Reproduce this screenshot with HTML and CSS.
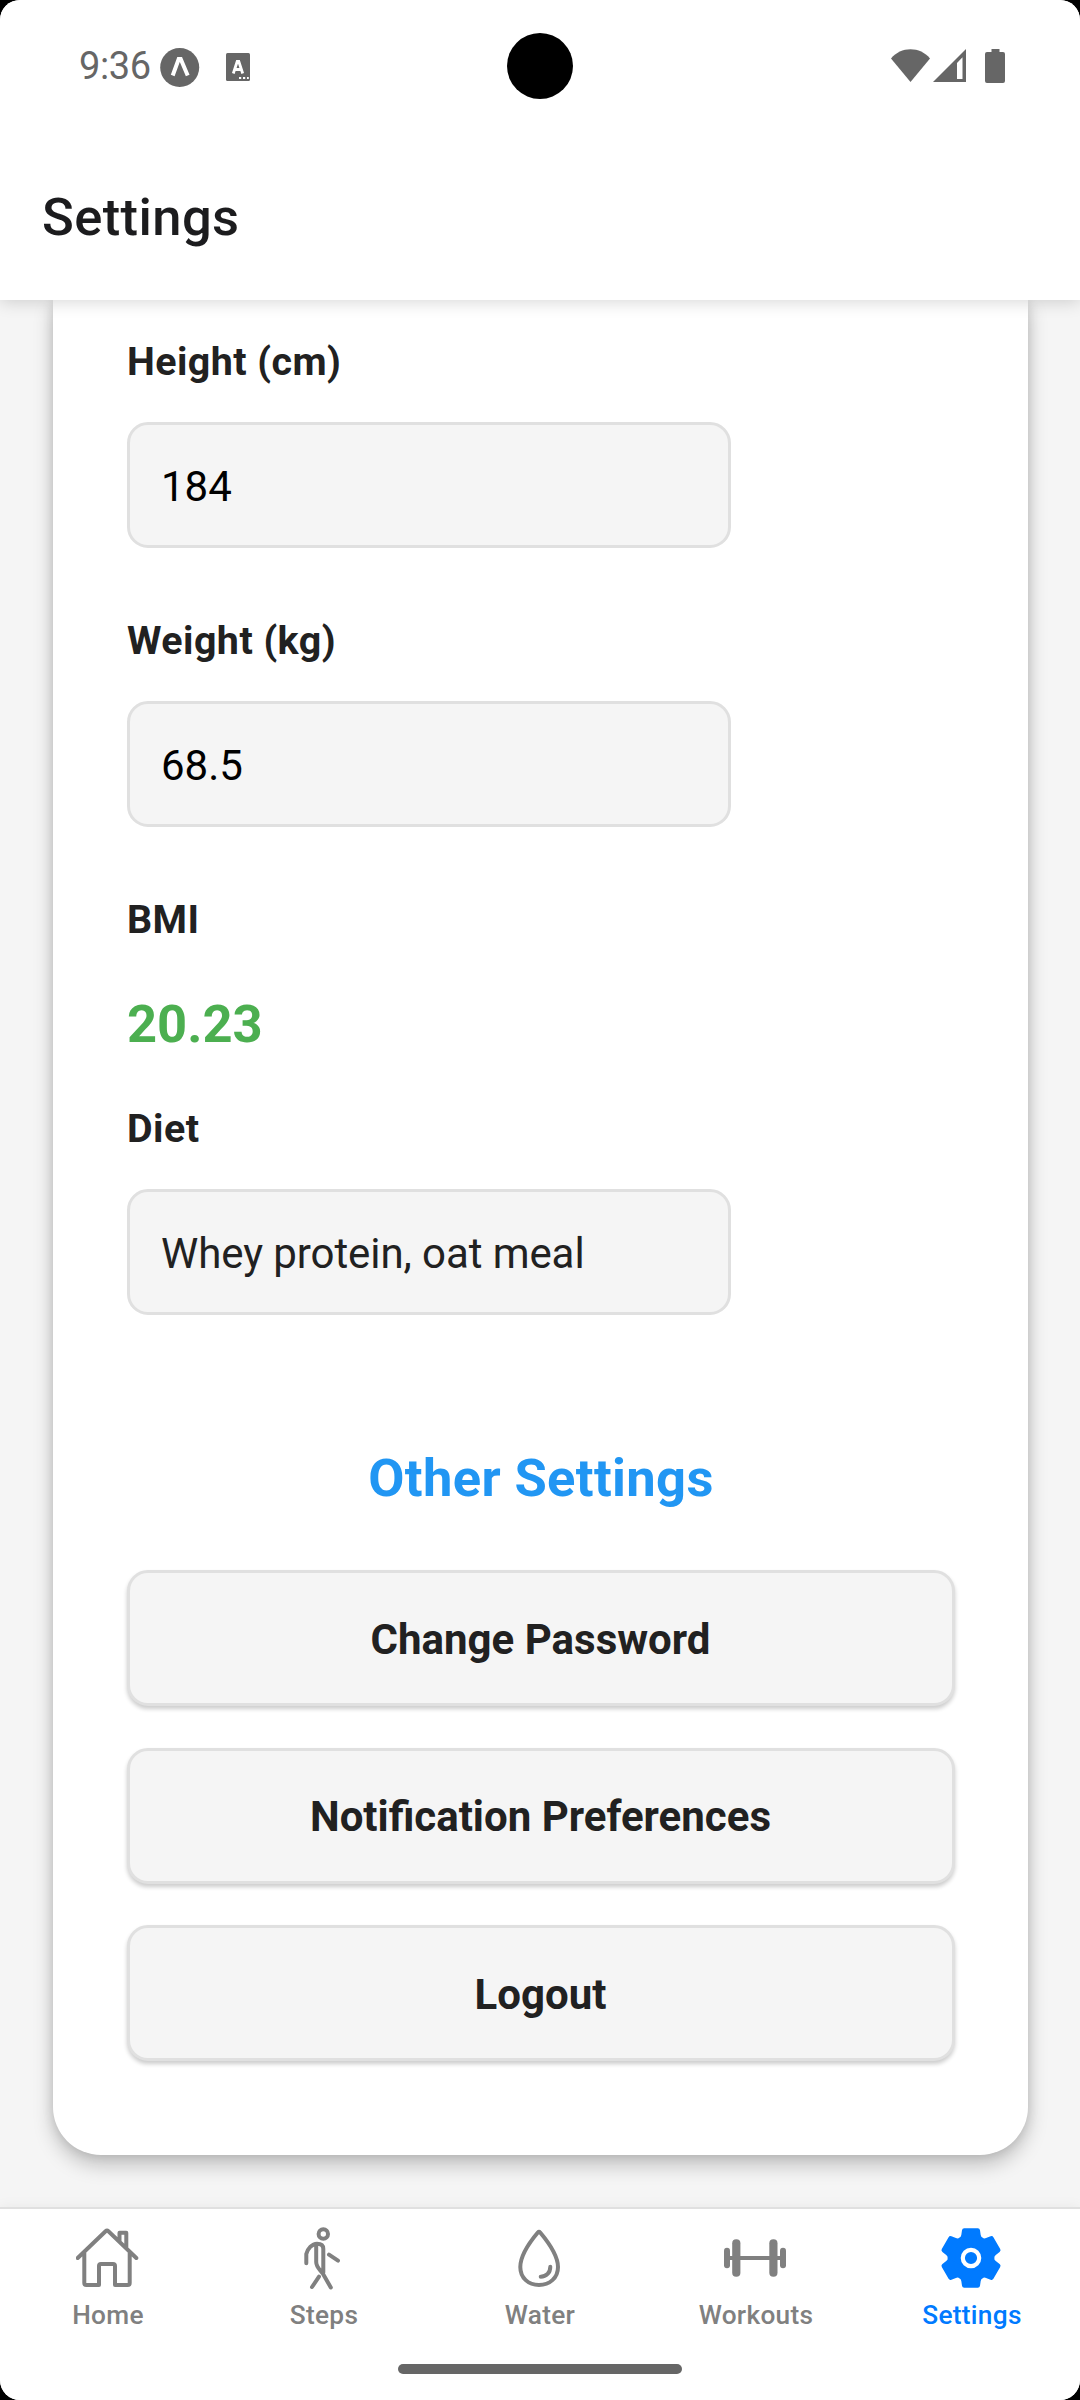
FILE: index.html
```html
<!DOCTYPE html>
<html lang="en">
<head>
<meta charset="utf-8">
<title>Settings</title>
<link rel="stylesheet" href="styles.css">
</head>
<body>
<div class="screen">
  <header class="top">
    <div class="status">
      <span class="clock">9:36</span>
      <svg class="expo" viewBox="0 0 40 40"><circle cx="19.700" cy="19.500" r="19.500" fill="#666"/><path d="M12.700 27.500 18.700 11h2L27.700 27.500" fill="none" stroke="#fff" stroke-width="4"/></svg>
      <svg class="lang" viewBox="0 0 24 28"><rect width="24" height="28" rx="1.500" fill="#666"/><path d="M7.300 20.500 11.200 8.500h1.600l3.900 12M8.800 16.500h6.400" fill="none" stroke="#fff" stroke-width="2.800"/><path d="M13 25h2.200M17 25h2.200M21 25h1.800" stroke="#fff" stroke-width="2.200"/></svg>
      <span class="spacer"></span>
      <svg class="wifi" viewBox="0 0 39 34"><path d="M19.500 33 0 9.500C5 3.500 12 .3 19.500 .3S34 3.500 39 9.500Z" fill="#666"/></svg>
      <svg class="signal" viewBox="0 0 33 33"><path fill-rule="evenodd" d="M33 0v33H0ZM29.500 8.200 24 14v16h5.500Z" fill="#666"/></svg>
      <svg class="battery" viewBox="0 0 20 34"><path d="M6.500 0h8v3H18q2 0 2 2v27q0 2-2 2H2q-2 0-2-2V5q0-2 2-2h4.500Z" fill="#666"/></svg>
    </div>
    <h1 class="title">Settings</h1>
  </header>
  <main class="content">
    <section class="card">
      <div class="field"><label class="label">Height (cm)</label><div class="input">184</div></div>
      <div class="field"><label class="label">Weight (kg)</label><div class="input">68.5</div></div>
      <div class="bmi"><div class="label">BMI</div><div class="bmi-value">20.23</div></div>
      <div class="field"><label class="label">Diet</label><div class="input input-soft">Whey protein, oat meal</div></div>
      <h2 class="section">Other Settings</h2>
      <div class="actions">
        <button class="action">Change Password</button>
        <button class="action">Notification Preferences</button>
        <button class="action">Logout</button>
      </div>
    </section>
  </main>
  <nav class="tabs">
    <a class="tab">
      <svg class="icon" viewBox="0 0 64 64"><path d="M1.700 32 29.600 5.200q1.400-1.300 2.800 0L60.300 32M8.300 27v30q0 2 2 2H23V40q0-2 2-2h12q2 0 2 2v19h12.700q2 0 2-2V27M43.500 15V6.700h6.800V22"/></svg>
      <span>Home</span>
    </a>
    <a class="tab">
      <svg class="icon" viewBox="0 0 64 64"><circle cx="31.300" cy="8" r="4.700"/><path d="M14.300 37.300V28C15.500 23 20 17.700 25 17.700c4 0 6.300 1.800 6.300 5V46.500M24.200 19v17c0 5 3.500 7.500 6.600 11.500l8 14M27 50.700 20 61M37 28.700l9 6"/></svg>
      <span>Steps</span>
    </a>
    <a class="tab">
      <svg class="icon" viewBox="0 0 64 64"><path d="M29.800 6.500q1.200-1.300 2.400 0C41 17 50 29.500 50 41c0 11-8.500 18-19 18s-18.700-7-18.700-18C12.300 29.500 21 17 29.800 6.500ZM42.300 40.700c0 6-4 10-9.600 10"/></svg>
      <span>Water</span>
    </a>
    <a class="tab">
      <svg class="icon icon-solid" viewBox="0 0 64 64"><rect y="21.700" width="6" height="20.500" rx="3"/><rect x="8.200" y="13.300" width="8.200" height="37.400" rx="4"/><rect x="45.300" y="13.300" width="8.200" height="37.400" rx="4"/><rect x="56" y="21.700" width="6" height="20.500" rx="3"/><rect x="3" y="30" width="56" height="4"/></svg>
      <span>Workouts</span>
    </a>
    <a class="tab tab-on">
      <svg class="icon icon-solid" viewBox="0 0 64 64">
        <defs><path id="tooth" d="M-11.700-20.200Q-10-20.800-9.700-23L-9-27.800Q-8.700-29.800-6.800-29.800H6.800Q8.700-29.800 9-27.800L9.700-23Q10-20.800 11.700-20.200L12 0H-12Z"/></defs>
        <g transform="translate(31 32)">
          <use href="#tooth"/><use href="#tooth" transform="rotate(60)"/><use href="#tooth" transform="rotate(120)"/><use href="#tooth" transform="rotate(180)"/><use href="#tooth" transform="rotate(240)"/><use href="#tooth" transform="rotate(300)"/>
          <circle class="ring" r="8.200"/>
        </g>
      </svg>
      <span>Settings</span>
    </a>
  </nav>
  <div class="camera"></div>
  <div class="home-bar"></div>
</div>
</body>
</html>
```
FILE: styles.css
```css
* { box-sizing: border-box; }
body { margin: 0; background: #000; font-family: Roboto, sans-serif; color: #212121; }
.screen { position: relative; width: 1080px; height: 2400px; overflow: hidden; border-radius: 20px; background: #f5f5f5; display: flex; flex-direction: column; }

.top { position: relative; z-index: 2; flex: none; height: 300px; background: #fff; box-shadow: 0 2px 16px rgba(0,0,0,.16); }
.status { height: 131px; padding: 0 75px 0 79px; display: flex; align-items: center; }
.clock { font-size: 38px; letter-spacing: -.4px; color: #666; width: 81px; }
.expo { width: 40px; height: 40px; margin-top: 4px; }
.lang { width: 24px; height: 28px; margin: 3px 0 0 26px; }
.spacer { flex: 1; }
.wifi { width: 39px; height: 34px; }
.signal { width: 33px; height: 33px; margin-left: 3px; }
.battery { width: 20px; height: 34px; margin-left: 19px; }
.title { margin: 54px 0 0 42px; font-size: 52.5px; line-height: 64px; font-weight: 500; letter-spacing: .4px; color: #1c1c1e; }

.content { flex: 1; min-height: 0; padding: 0 52px 0 53px; }
.card { height: 1855px; background: #fff; border-radius: 0 0 48px 48px; padding: 35px 73px 0 74px; box-shadow: 0 10px 20px rgba(0,0,0,.22), 0 0 12px rgba(0,0,0,.12); }
.label { display: block; padding-top: 1px; font-size: 39.4px; line-height: 52px; font-weight: 700; letter-spacing: .45px; }
.input { width: 604px; height: 126px; margin: 34px 0 66px; padding: 0 31px; border: 3px solid #e0e0e0; border-radius: 21px; background: #f5f5f5; color: #000; font-size: 42px; line-height: 123px; }
.input-soft { color: #212121; letter-spacing: -.08px; }
.bmi-value { margin: 46px 0; font-size: 52.5px; font-weight: 700; line-height: 64px; color: #4caf50; }
.section { margin: 131px 0 0; text-align: center; font-size: 52.5px; line-height: 64px; letter-spacing: .36px; color: #2196f3; }
.actions { display: grid; gap: 41.5px; margin-top: 60px; }
.action { height: 136px; padding: 2px 1px 0 0; border: 3px solid #e0e0e0; border-radius: 21px; background: #f5f5f5; font: 700 42px Roboto, sans-serif; color: #212121; box-shadow: 0 3px 4px rgba(0,0,0,.2); }

.tabs { position: relative; flex: none; height: 193px; border-top: 2px solid #e0e0e0; background: #fff; display: grid; grid-template-columns: repeat(5, 1fr); box-shadow: 0 -1px 12px rgba(0,0,0,.05); }
.tab { display: flex; flex-direction: column; align-items: center; padding-top: 17px; font-size: 26.25px; font-weight: 500; letter-spacing: .3px; color: #808080; }
.icon { width: 64px; height: 64px; fill: none; stroke: currentColor; stroke-width: 4; stroke-linecap: round; stroke-linejoin: round; }
.icon-solid { fill: currentColor; stroke: none; }
.ring { fill: none; stroke: #fff; stroke-width: 4.2; }
.tab span { line-height: 32px; margin-top: 9px; }
.tab-on { color: #007aff; }

.camera { position: absolute; z-index: 3; left: 507px; top: 33px; width: 66px; height: 66px; border-radius: 50%; background: #000; }
.home-bar { position: absolute; left: 398px; top: 2364px; width: 284px; height: 10px; border-radius: 5px; background: #666; }
```
